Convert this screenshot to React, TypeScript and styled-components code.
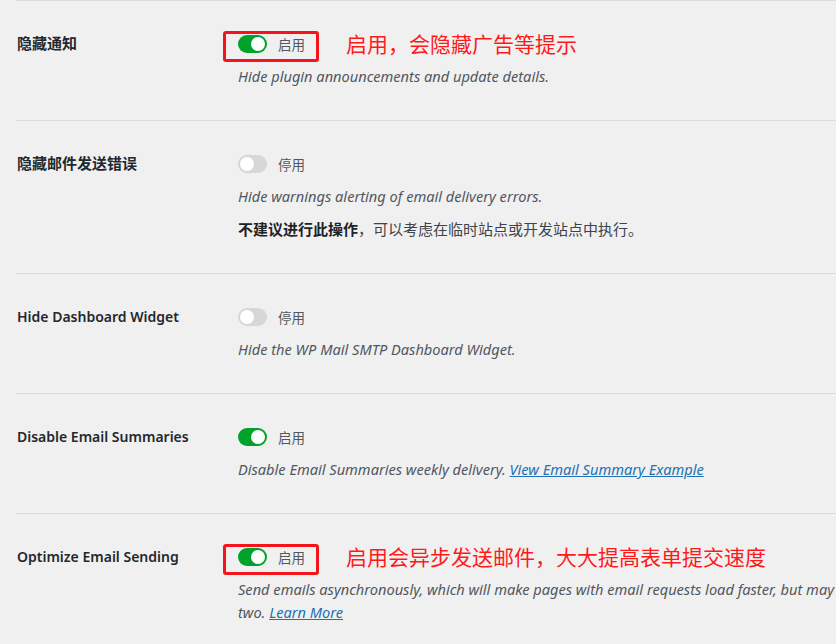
import React from 'react';
import styled, { createGlobalStyle } from 'styled-components';

const GlobalStyle = createGlobalStyle`
    html, body {
        margin: 0;
        padding: 0;
        background: #f0f0f1;
        overflow: hidden;
    }
    body {
        font-family: "Noto Sans", "Noto Sans CJK SC", sans-serif;
        color: #1d2327;
    }
`

const Page = styled.div`
    padding-left: 16px;
    width: 1200px;
`

const Row = styled.div`
    display: grid;
    grid-template-columns: 222px 1fr;
    border-top: 1px solid #dcdcde;
    padding: 29px 0 32px 0;
`

const Label = styled.div`
    font-size: 14px;
    font-weight: 600;
    line-height: 27px;
    padding-left: 1px;
    color: #23282d;
    &:lang(zh) {
        font-size: 15px;
    }
`

const Field = styled.div`
    display: flex;
    flex-direction: column;
`

const ToggleLine = styled.div`
    position: relative;
    display: flex;
    align-items: center;
    height: 28px;
`

const Switch = styled.span<{ $on: boolean }>`
    position: relative;
    display: inline-block;
    width: 29px;
    height: 18px;
    border-radius: 9px;
    background: ${(p) => (p.$on ? '#00a32a' : '#d7d7d7')};
`

const Knob = styled.span<{ $on: boolean }>`
    position: absolute;
    top: 2px;
    left: ${(p) => (p.$on ? '13px' : '2px')};
    width: 14px;
    height: 14px;
    border-radius: 50%;
    background: #fff;
`

const SwitchText = styled.span`
    margin-left: 11px;
    font-size: 13.5px;
    color: #50575e;
`

const Highlight = styled.span`
    position: absolute;
    left: -15px;
    top: 1px;
    width: 90px;
    height: 25px;
    border: 3px solid #f5141b;
    border-radius: 3px;
`

const Note = styled.span`
    margin-left: 41px;
    font-size: 21px;
    line-height: 28px;
    color: #ff1a1a;
`

const Description = styled.p`
    margin: 7px 0 0 0;
    font-size: 14.6px;
    font-style: italic;
    line-height: 23px;
    color: #50575e;
`

const Extra = styled.p`
    margin: 10px 0 0 0;
    font-size: 15px;
    line-height: 23px;
    color: #3c434a;
    strong {
        color: #1d2327;
    }
`

const Link = styled.a`
    color: #2271b1;
    text-decoration: underline;
`

interface Setting {
    label: string,
    lang?: string,
    enabled: boolean,
    note?: string,
    description: React.ReactNode,
    extra?: React.ReactNode
}

const settings: Setting[] = [
    {
        label: '隐藏通知',
        lang: 'zh',
        enabled: true,
        note: '启用，会隐藏广告等提示',
        description: 'Hide plugin announcements and update details.'
    },
    {
        label: '隐藏邮件发送错误',
        lang: 'zh',
        enabled: false,
        description: 'Hide warnings alerting of email delivery errors.',
        extra: <><strong>不建议进行此操作</strong>，可以考虑在临时站点或开发站点中执行。</>
    },
    {
        label: 'Hide Dashboard Widget',
        enabled: false,
        description: 'Hide the WP Mail SMTP Dashboard Widget.'
    },
    {
        label: 'Disable Email Summaries',
        enabled: true,
        description: <>Disable Email Summaries weekly delivery. <Link href="#">View Email Summary Example</Link></>
    },
    {
        label: 'Optimize Email Sending',
        enabled: true,
        note: '启用会异步发送邮件，大大提高表单提交速度',
        description: <>Send emails asynchronously, which will make pages with email requests load faster, but may delay email delivery by a minute or<br />two. <Link href="#">Learn More</Link></>
    }
]

const App: React.FC = () => {
    return (<>
        <GlobalStyle />
        <Page>
            {settings.map((s) => (
                <Row key={s.label}>
                    <Label lang={s.lang}>{s.label}</Label>
                    <Field>
                        <ToggleLine>
                            <Switch $on={s.enabled}><Knob $on={s.enabled} /></Switch>
                            <SwitchText>{s.enabled ? '启用' : '停用'}</SwitchText>
                            {s.note ? <>
                                <Highlight />
                                <Note>{s.note}</Note>
                            </> : null}
                        </ToggleLine>
                        <Description>{s.description}</Description>
                        {s.extra ? <Extra lang="zh">{s.extra}</Extra> : null}
                    </Field>
                </Row>
            ))}
        </Page>
    </>);
}

export default App;
